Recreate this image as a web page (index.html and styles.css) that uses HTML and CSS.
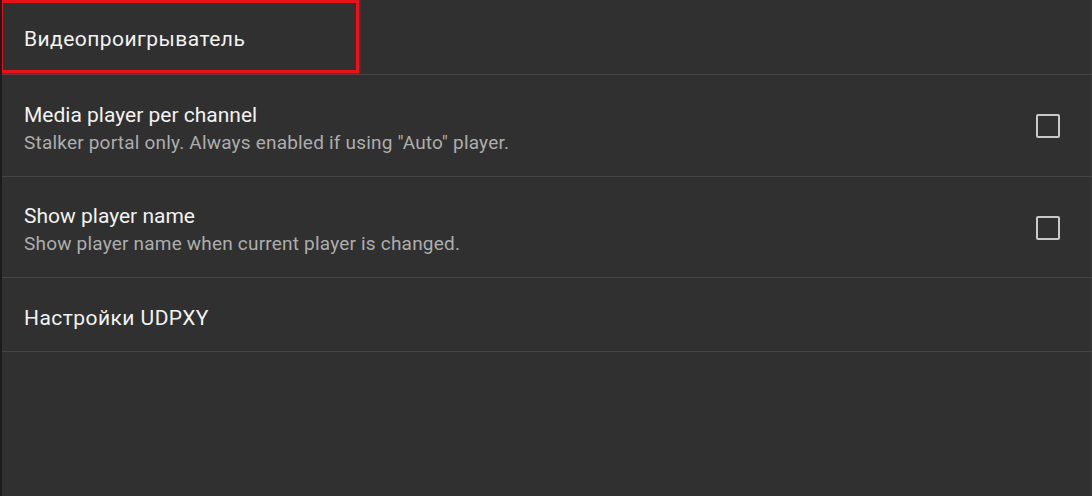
FILE: index.html
```html
<!DOCTYPE html>
<html lang="ru">
<head>
<meta charset="utf-8">
<title>Видеопроигрыватель</title>
<link rel="stylesheet" href="styles.css">
</head>
<body>
<div class="screen">
  <div class="list">
    <div class="row header">
      <span class="title cyr">Видеопроигрыватель</span>
      <div class="highlight"></div>
    </div>
    <div class="row pref">
      <div class="texts">
        <div class="title">Media player per channel</div>
        <div class="summary">Stalker portal only. Always enabled if using "Auto" player.</div>
      </div>
      <div class="checkbox"></div>
    </div>
    <div class="row pref">
      <div class="texts">
        <div class="title">Show player name</div>
        <div class="summary">Show player name when current player is changed.</div>
      </div>
      <div class="checkbox"></div>
    </div>
    <div class="row single">
      <span class="title cyr">Настройки UDPXY</span>
    </div>
  </div>
</div>
</body>
</html>
```

FILE: styles.css
```css
html, body {
  margin: 0;
  padding: 0;
  background: #303030;
}

body {
  font-family: Roboto, "Noto Sans", sans-serif;
  color: #f2f2f2;
}

.screen {
  width: 1092px;
  height: 496px;
  box-sizing: border-box;
  border-left: 2px solid #1c1c1c;
  background: #303030;
  box-shadow: inset -8px 0 0 -7px #3a3a3a;
  overflow: hidden;
}

.list {
  display: flex;
  flex-direction: column;
}

.row {
  position: relative;
  display: flex;
  align-items: center;
  padding-left: 22px;
  padding-right: 32px;
  border-bottom: 1px solid #464646;
}

.title {
  font-size: 21px;
  line-height: 24px;
  color: #f2f2f2;
}

.title.cyr {
  letter-spacing: 0.45px;
}

.summary {
  font-size: 19px;
  line-height: 22px;
  letter-spacing: 0.2px;
  color: #adadad;
  margin-top: 5px;
}

.header {
  height: 74px;
}

.header .title {
  padding-top: 4px;
}

.pref {
  height: 101px;
  justify-content: space-between;
}

.pref + .pref {
  height: 100px;
}

.texts {
  display: flex;
  flex-direction: column;
  padding-top: 5px;
}

.single {
  height: 73px;
}

.single .title {
  padding-top: 7px;
}

.checkbox {
  width: 20px;
  height: 20px;
  border: 2.5px solid #c9c9c9;
  border-radius: 2px;
  margin-top: 1px;
}

.highlight {
  position: absolute;
  left: -2px;
  top: 0;
  width: 353px;
  height: 67px;
  border: 3.5px solid #e8121a;
  box-shadow: 0 0 2px 1px rgba(232, 18, 26, 0.6);
  pointer-events: none;
}
```
